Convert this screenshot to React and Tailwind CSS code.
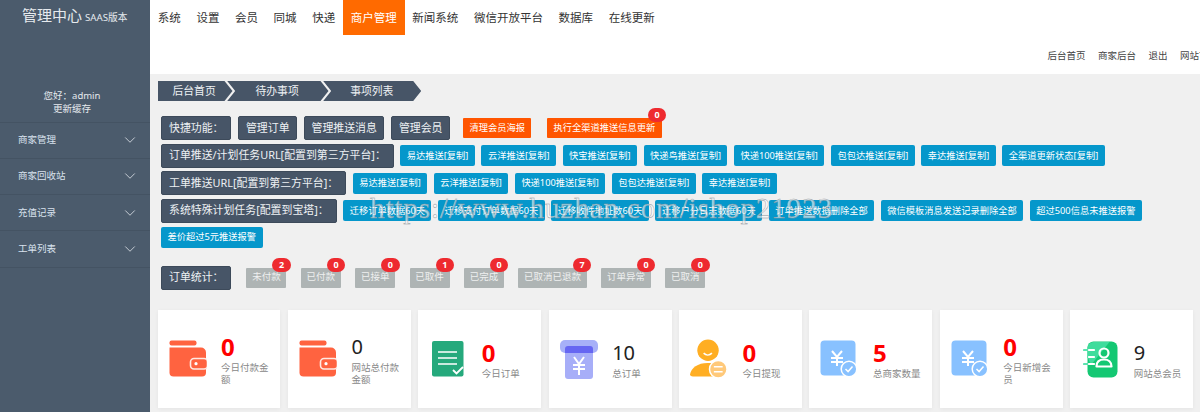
import { ChevronDown } from "lucide-react";

const font = "font-['Noto_Sans','Noto_Sans_CJK_SC',sans-serif]";

const navItems = ["系统", "设置", "会员", "同城", "快递", "商户管理", "新闻系统", "微信开放平台", "数据库", "在线更新"];
const sideItems = ["商家管理", "商家回收站", "充值记录", "工单列表"];

const orderPush = ["易达推送[复制]", "云洋推送[复制]", "快宝推送[复制]", "快递鸟推送[复制]", "快递100推送[复制]", "包包达推送[复制]", "幸达推送[复制]", "全渠道更新状态[复制]"];
const ticketPush = ["易达推送[复制]", "云洋推送[复制]", "快递100推送[复制]", "包包达推送[复制]", "幸达推送[复制]"];
const specialTasks = ["迁移订单数据60天", "迁移支付订单数据60天", "迁移收件地址数60天", "迁移户分日志数据60天", "订单推送数据删除全部", "微信模板消息发送记录删除全部", "超过500信息未推送报警", "差价超过5元推送报警"];

const stats = [
  { label: "未付款", count: 2 },
  { label: "已付款", count: 0 },
  { label: "已接单", count: 0 },
  { label: "已取件", count: 1 },
  { label: "已完成", count: 0 },
  { label: "已取消已退款", count: 7 },
  { label: "订单异常", count: 0 },
  { label: "已取消", count: 0 },
];

function WalletIcon() {
  return (
    <svg width="38" height="38" viewBox="0 0 38 38">
      <rect x="0.5" y="0.5" width="27" height="5" rx="2" fill="#ff6340" />
      <path d="M0.5 7.5H32a5 5 0 0 1 5 5v20a4 4 0 0 1-4 4H4.500a4 4 0 0 1-4-4z" fill="#ff6340" />
      <rect x="21.500" y="18.500" width="17" height="10.500" rx="3.500" fill="#ff6340" stroke="#ffe9e2" strokeWidth="1.600" />
      <circle cx="27" cy="23.700" r="1.600" fill="#fff" />
    </svg>
  );
}

function DocIcon() {
  return (
    <svg width="32" height="36" viewBox="0 0 32 36">
      <rect width="31.5" height="35.5" rx="2" fill="#25a97c" />
      <path d="M6 11h19M6 17h19M6 23h19" stroke="#fff" strokeWidth="1.5" />
      <path d="M21 29l3.5 3.5L31 26" stroke="#fff" strokeWidth="1.8" fill="none" />
    </svg>
  );
}

function BoxIcon() {
  return (
    <svg width="38" height="39" viewBox="0 0 38 39">
      <rect x="5" y="6" width="28" height="33" rx="3" fill="#a7aef8" />
      <rect width="38" height="13" rx="5" fill="#a7b0f8" />
      <path d="M5 13V9a3 3 0 0 1 3-3h22a3 3 0 0 1 3 3v4z" fill="#6666f2" />
      <path d="M14 17l5 7 5-7M13 25h12M13 29h12M19 24v11" stroke="#fff" strokeWidth="2" fill="none" />
    </svg>
  );
}

function PersonIcon() {
  return (
    <svg width="39" height="40" viewBox="0 0 39 40">
      <circle cx="18.5" cy="11" r="11" fill="#ffae23" />
      <path d="M14 14c2.500 2.500 6 2.500 8.500 0" stroke="#fff" strokeWidth="1.600" fill="none" />
      <path d="M0 36c1-7 8-12 18-12 7 0 12 2 14 6l-3 8H3c-2 0-3-1-3-2z" fill="#ffae23" />
      <circle cx="29" cy="30.500" r="9" fill="#ffc97a" stroke="#fff" strokeWidth="1.500" />
      <path d="M24.500 28h9M24.500 33h9" stroke="#fff" strokeWidth="1.600" />
    </svg>
  );
}

function MoneyCheckIcon() {
  return (
    <svg width="38" height="38" viewBox="0 0 38 38">
      <rect width="35" height="35" x="0.5" y="0.500" rx="4" fill="#88c1ff" />
      <path d="M12 11l5 6 5-6M11 18h12M11 22h12M17 17v9" stroke="#fff" strokeWidth="2" fill="none" />
      <circle cx="29" cy="29" r="7.800" fill="#88c1ff" stroke="#fff" strokeWidth="1.500" />
      <path d="M25.500 29l2.600 2.600 4.400-5" stroke="#fff" strokeWidth="1.500" fill="none" />
    </svg>
  );
}

function MemberIcon() {
  return (
    <svg width="35" height="37" viewBox="0 0 35 37">
      <rect x="4.500" y="0.500" width="30" height="36" rx="6" fill="#14c873" />
      <path d="M4.500 16V7a6 6 0 0 1 6-6h16L8 24z" fill="#3fdc9c" />
      <path d="M1 9h10M5 16h6M1 23h10" stroke="#5be3ae" strokeWidth="2.200" strokeLinecap="round" />
      <path d="M6 9h5M6 16h5M6 23h5" stroke="#fff" strokeWidth="2.200" strokeLinecap="round" />
      <circle cx="21" cy="12" r="4.500" fill="none" stroke="#fff" strokeWidth="2.200" />
      <path d="M13.500 25.500c0-4.500 3-7 7.500-7s7.500 2.500 7.500 7z" fill="none" stroke="#fff" strokeWidth="2.200" strokeLinejoin="round" />
    </svg>
  );
}

const cards = [
  { icon: <WalletIcon />, value: "0", label: "今日付款金额", red: true },
  { icon: <WalletIcon />, value: "0", label: "网站总付款金额" },
  { icon: <DocIcon />, value: "0", label: "今日订单", red: true },
  { icon: <BoxIcon />, value: "10", label: "总订单" },
  { icon: <PersonIcon />, value: "0", label: "今日提现", red: true },
  { icon: <MoneyCheckIcon />, value: "5", label: "总商家数量", red: true },
  { icon: <MoneyCheckIcon />, value: "0", label: "今日新增会员", red: true },
  { icon: <MemberIcon />, value: "9", label: "网站总会员" },
];

function Label({ children }) {
  return (
    <span className="h-[24px] flex items-center px-[7px] text-[10.900px] whitespace-nowrap text-[#eef1f4] bg-[#475567] border border-[#3d4a5a] rounded-[2px]">
      {children}
    </span>
  );
}

function DarkBtn({ children }) {
  return (
    <span className="h-[24px] flex items-center px-[6.500px] text-[10.900px] whitespace-nowrap text-[#eef1f4] bg-[#475567] border border-[#3d4a5a] rounded-[2px]">
      {children}
    </span>
  );
}

function BlueBtn({ children }) {
  return (
    <span className="h-[21px] flex items-center px-[6.500px] text-[9.250px] whitespace-nowrap text-white bg-[#0597cb] rounded-[2px]">
      {children}
    </span>
  );
}

function Badge({ children }) {
  return (
    <span className="absolute -top-[10px] -right-[4.500px] w-[18.500px] h-[14px] rounded-full bg-[#ee2a2f] text-white text-[9px] font-bold flex items-center justify-center">
      {children}
    </span>
  );
}

export default function App() {
  return (
    <div className={`${font} flex h-[412px] w-[1200px] overflow-hidden bg-[#f0f0f0]`}>
      {/* Sidebar */}
      <aside className="w-[150px] shrink-0 bg-[#4b5b6c] text-[#e6eaee]">
        <div className="h-[31px] pl-[22px] flex items-baseline pt-[4px] whitespace-nowrap">
          <span className="text-[15px]">管理中心</span>
          <span className="text-[9.700px] ml-[3px]">SAAS版本</span>
        </div>
        <div className="pt-[58px] pr-[6px] text-center text-[9.500px] leading-[13px] h-[91px]">
          <p>您好：admin</p>
          <p>更新缓存</p>
        </div>
        <ul className="border-t border-[#445363] mt-[-0.500px]">
          {sideItems.map((item) => (
            <li key={item} className="h-[36.300px] border-b border-[#445363] pl-[18px] pr-[11.500px] flex items-center justify-between text-[9.500px] text-[#d9e2ee]">
              {item}
              <ChevronDown size={18} strokeWidth={1.3} className="text-[#c7ced6]" />
            </li>
          ))}
        </ul>
      </aside>

      <div className="flex-1 min-w-0 flex flex-col">
        {/* Top nav */}
        <header className="h-[74px] bg-white">
          <nav className="flex h-[35px] text-[11.500px] text-[#333]">
            {navItems.map((item) => (
              <span key={item} className={`px-[7.800px] flex items-center whitespace-nowrap ${item === "商户管理" ? "bg-[#ff6a00] text-white" : ""}`}>
                {item}
              </span>
            ))}
          </nav>
          <div className="flex justify-end gap-[12.500px] -mr-[18px] mt-[14px] text-[9.500px] leading-[13px] text-[#444]">
            <span>后台首页</span>
            <span>商家后台</span>
            <span>退出</span>
            <span>网站首页</span>
          </div>
        </header>

        {/* Content */}
        <main className="relative flex-1 pl-[7.500px] pr-[7px] pt-[7px]">
          <div className="flex h-[20px] text-[10.800px] text-[#eef1f4]">
            <span className="w-[75px] pl-[15px] flex items-center bg-[#475567] [clip-path:polygon(0_0,calc(100%_-_8px)_0,100%_50%,calc(100%_-_8px)_100%,0_100%)]">后台首页</span>
            <span className="w-[101.300px] -ml-[5.300px] pl-[28.300px] flex items-center bg-[#475567] [clip-path:polygon(0_0,calc(100%_-_8px)_0,100%_50%,calc(100%_-_8px)_100%,0_100%,8px_50%)]">待办事项</span>
            <span className="w-[98px] -ml-[5.300px] pl-[27px] flex items-center bg-[#475567] [clip-path:polygon(0_0,calc(100%_-_8px)_0,100%_50%,calc(100%_-_8px)_100%,0_100%,8px_50%)]">事项列表</span>
          </div>

          <div className="pl-[3.500px] mt-[15px] flex flex-col gap-[3.500px]">
            <div className="flex items-center gap-[7px]">
              <Label>快捷功能：</Label>
              <DarkBtn>管理订单</DarkBtn>
              <DarkBtn>管理推送消息</DarkBtn>
              <DarkBtn>管理会员</DarkBtn>
              <span className="ml-[6px] h-[20px] flex items-center px-[6.500px] text-[9.250px] text-white bg-[#ff5500] rounded-[1px]">清理会员海报</span>
              <span className="relative ml-[8.500px] h-[20px] flex items-center px-[6.500px] text-[9.250px] text-white bg-[#ff5500] rounded-[1px]">
                执行全渠道推送信息更新
                <Badge>0</Badge>
              </span>
            </div>
            <div className="flex flex-wrap items-center gap-x-[6.500px] gap-y-[4px]">
              <Label>订单推送/计划任务URL[配置到第三方平台]：</Label>
              {orderPush.map((item) => <BlueBtn key={item}>{item}</BlueBtn>)}
            </div>
            <div className="flex flex-wrap items-center gap-x-[6.500px] gap-y-[4px]">
              <Label>工单推送URL[配置到第三方平台]：</Label>
              {ticketPush.map((item) => <BlueBtn key={item}>{item}</BlueBtn>)}
            </div>
            <div className="flex flex-wrap items-center gap-x-[6.500px] gap-y-[4px]">
              <Label>系统特殊计划任务[配置到宝塔]：</Label>
              {specialTasks.map((item) => <BlueBtn key={item}>{item}</BlueBtn>)}
            </div>
            <div className="flex items-center mt-[14.500px]">
              <Label>订单统计：</Label>
              <div className="flex gap-[14.500px] ml-[15px]">
                {stats.map((s) => (
                  <span key={s.label} className="relative h-[20px] flex items-center px-[5.700px] text-[9.500px] whitespace-nowrap text-[#eef0f0] bg-[#aeb4b4] rounded-[1px]">
                    {s.label}
                    <Badge>{s.count}</Badge>
                  </span>
                ))}
              </div>
            </div>
          </div>

          {/* Stat cards */}
          <div className="grid grid-cols-8 gap-[7.500px] mt-[20.500px]">
            {cards.map((c) => (
              <div key={c.label} className="h-[98px] bg-white shadow-[0_1px_4px_rgba(0,0,0,0.05)] flex items-center pl-[11px] pr-[8px]">
                <div className="w-[38px] shrink-0 flex justify-center">{c.icon}</div>
                <div className="ml-[14.500px] min-w-0">
                  <p className={`leading-[30px] ${c.red ? "text-[24px] font-bold text-[#ff0000]" : "text-[20px] text-[#222]"}`}>{c.value}</p>
                  <p className="text-[9.500px] leading-[12px] text-[#888]">{c.label}</p>
                </div>
              </div>
            ))}
          </div>

          {/* Watermark */}
          <span className="absolute left-[220px] top-[117px] text-[29px] leading-[34px] tracking-[0.9px] whitespace-nowrap font-['Liberation_Serif',serif] text-white/60 [-webkit-text-stroke:0.4px_#8d9399] pointer-events-none">
            https://www.huzhan.com/ishop21923
          </span>
        </main>
      </div>
    </div>
  );
}
